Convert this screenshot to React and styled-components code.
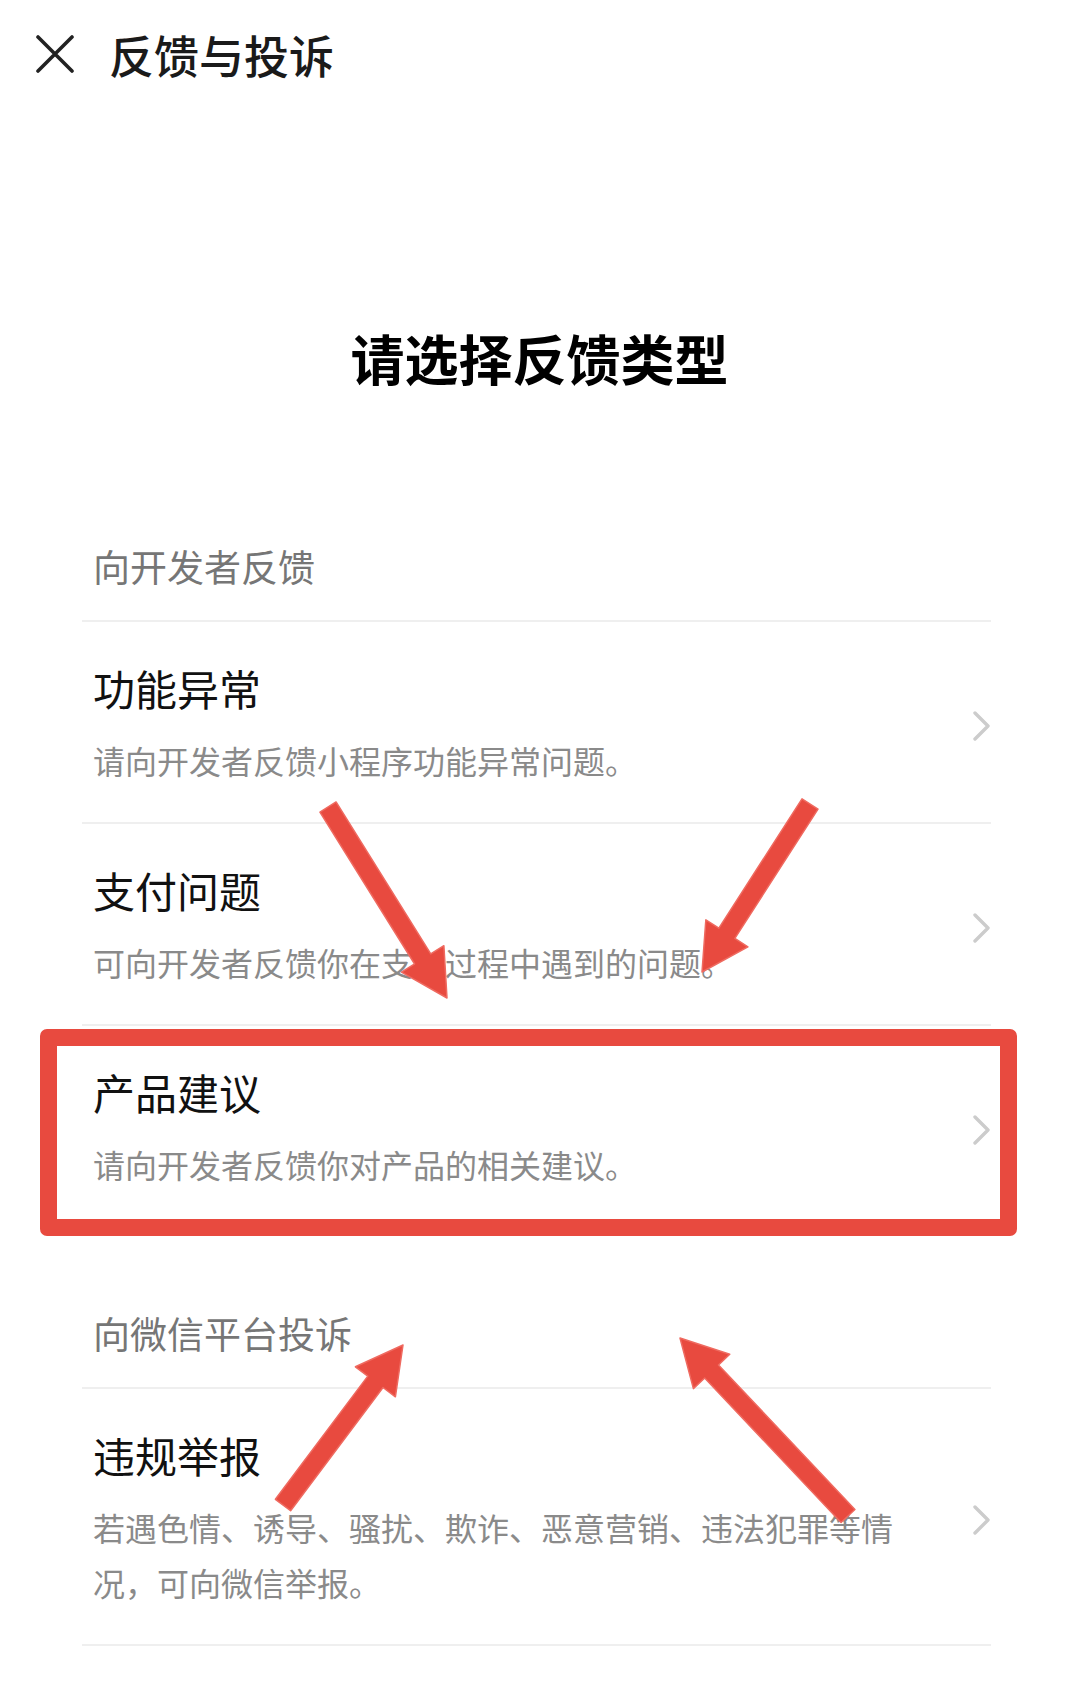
import React from 'react'
import styled, { createGlobalStyle } from 'styled-components'

const GlobalStyle = createGlobalStyle`
    body {
        margin: 0;
        background: #ffffff;
        font-family: "Noto Sans CJK SC", "Noto Sans", sans-serif;
    }
`

const Page = styled.div`
    position: relative;
    width: 1079px;
    min-height: 1705px;
    background: #ffffff;
    overflow: hidden;
`
const TopBar = styled.div`
    display: flex;
    align-items: center;
    gap: 35px;
    height: 108px;
    padding-left: 36px;
`
const CloseButton = styled.button`
    display: flex;
    padding: 0;
    border: 0;
    background: transparent;
    cursor: pointer;
`
const TopTitle = styled.h1`
    margin: 0;
    font-size: 45px;
    line-height: 1;
    font-weight: 500;
    color: #1a1a1a;
`
const Heading = styled.h2`
    margin: 218px 0 0;
    text-align: center;
    font-size: 54px;
    line-height: 64px;
    font-weight: 700;
    color: #000000;
`
const List = styled.div`
    margin: 71px 88px 0 82px;
`
const SectionHeader = styled.div`
    padding: 80px 11px 29px;
    font-size: 37px;
    line-height: 50px;
    color: #767676;
    border-bottom: 2px solid #efefef;
`
const Row = styled.div`
    position: relative;
    display: flex;
    align-items: center;
    padding: 41px 0 34px 11px;
    border-bottom: 2px solid #efefef;
    cursor: pointer;
`
const RowText = styled.div`
    flex: 1;
`
const RowTitle = styled.div`
    font-size: 42px;
    line-height: 50px;
    color: #111111;
`
const RowDesc = styled.div`
    max-width: 815px;
    margin-top: 20px;
    font-size: 32px;
    line-height: 55px;
    color: #8a8a8a;
`
const Highlight = styled.div`
    position: absolute;
    top: 3px;
    bottom: -10px;
    left: -42px;
    right: -26px;
    border: 17px solid #e84a3f;
    border-radius: 7px;
    pointer-events: none;
`
const Overlay = styled.svg`
    position: absolute;
    top: 0;
    left: 0;
    pointer-events: none;
`

const CloseIcon = () => (
    <svg width="38" height="38" viewBox="0 0 38 38">
        <path d="M2 2 L36 36 M36 2 L2 36" stroke="#222" strokeWidth="3.6" strokeLinecap="round" />
    </svg>
)

const Chevron = () => (
    <svg width="18" height="30" viewBox="0 0 18 30">
        <polyline points="2,2 15,15 2,28" fill="none" stroke="#cccccc" strokeWidth="3.4" strokeLinejoin="round" strokeLinecap="round" />
    </svg>
)

const arrowPoints = ([tx, ty], [px, py]) => {
    const dx = px - tx
    const dy = py - ty
    const len = Math.hypot(dx, dy)
    const ux = dx / len
    const uy = dy / len
    const nx = -uy
    const ny = ux
    const head = 46
    const hw = 25
    const sw = 9.5
    const bx = px - ux * head
    const by = py - uy * head
    return [
        [tx + nx * sw, ty + ny * sw],
        [bx + nx * sw, by + ny * sw],
        [bx + nx * hw, by + ny * hw],
        [px, py],
        [bx - nx * hw, by - ny * hw],
        [bx - nx * sw, by - ny * sw],
        [tx - nx * sw, ty - ny * sw],
    ].map(p => p.join(',')).join(' ')
}

const arrows = [
    [[328, 807], [447, 998]],
    [[810, 804], [702, 972]],
    [[283, 1505], [403, 1345]],
    [[848, 1516], [680, 1338]],
]

const sections = [
    {
        title: '向开发者反馈',
        items: [
            { title: '功能异常', desc: '请向开发者反馈小程序功能异常问题。' },
            { title: '支付问题', desc: '可向开发者反馈你在支付过程中遇到的问题。' },
            { title: '产品建议', desc: '请向开发者反馈你对产品的相关建议。', marked: true },
        ],
    },
    {
        title: '向微信平台投诉',
        items: [
            { title: '违规举报', desc: '若遇色情、诱导、骚扰、欺诈、恶意营销、违法犯罪等情况，可向微信举报。' },
        ],
    },
]

const App = () => {
    return (
        <Page>
            <GlobalStyle />
            <TopBar>
                <CloseButton><CloseIcon /></CloseButton>
                <TopTitle>反馈与投诉</TopTitle>
            </TopBar>
            <Heading>请选择反馈类型</Heading>
            <List>
                {sections.map(section => (
                    <div key={section.title}>
                        <SectionHeader>{section.title}</SectionHeader>
                        {section.items.map(item => (
                            <Row key={item.title}>
                                <RowText>
                                    <RowTitle>{item.title}</RowTitle>
                                    <RowDesc>{item.desc}</RowDesc>
                                </RowText>
                                <Chevron />
                                {item.marked && <Highlight />}
                            </Row>
                        ))}
                    </div>
                ))}
            </List>
            <Overlay width="1079" height="1705" viewBox="0 0 1079 1705">
                {arrows.map(([t, p], i) => (
                    <polygon key={i} points={arrowPoints(t, p)} fill="#e84a3f" stroke="#ef6a60" strokeWidth="1.5" strokeLinejoin="round" />
                ))}
            </Overlay>
        </Page>
    )
}

export default App
